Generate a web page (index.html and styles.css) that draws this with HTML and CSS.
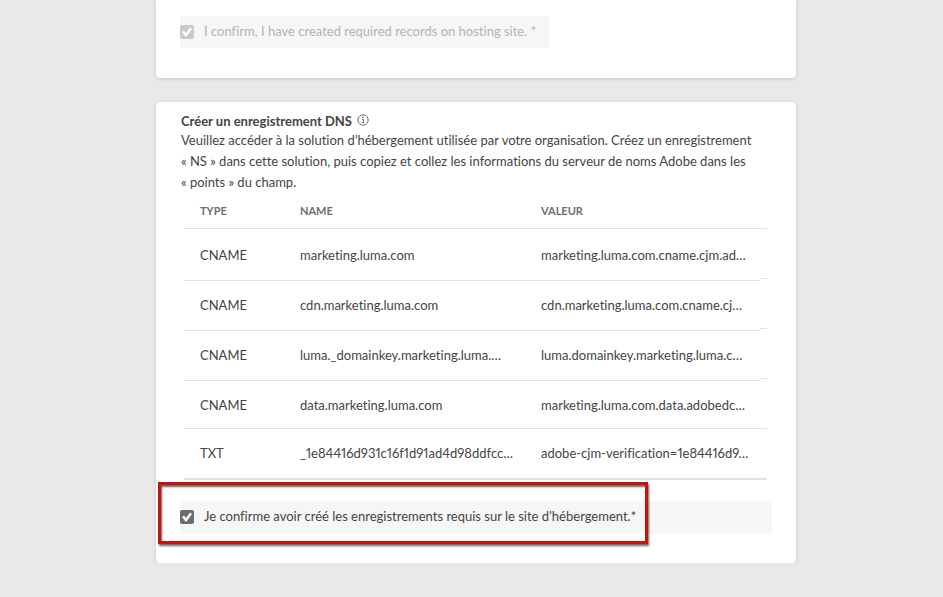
FILE: index.html
```html
<!DOCTYPE html>
<html lang="fr">
<head>
<meta charset="utf-8">
<title>Créer un enregistrement DNS</title>
<link rel="stylesheet" href="styles.css">
</head>
<body>
<main class="page">
  <section class="card card-previous">
    <label class="confirm confirm-disabled" lang="en">
      <input class="check" type="checkbox" checked disabled>
      <span>I confirm, I have created required records on hosting site. *</span>
    </label>
  </section>

  <section class="card card-dns">
    <h2 class="title">Créer un enregistrement DNS
      <svg class="info" viewBox="0 0 12 12" aria-hidden="true">
        <circle cx="6" cy="6" r="5.2" fill="none" stroke="currentColor"/>
        <circle cx="6" cy="3.4" r=".8" fill="currentColor"/>
        <path d="M5 5.2h1.3v3.3M4.8 8.7h2.6" fill="none" stroke="currentColor"/>
      </svg>
    </h2>
    <p class="intro">Veuillez accéder à la solution d’hébergement utilisée par votre organisation. Créez un enregistrement<br>
    «&nbsp;NS&nbsp;» dans cette solution, puis copiez et collez les informations du serveur de noms Adobe dans les<br>
    «&nbsp;points&nbsp;» du champ.</p>

    <table class="records">
      <colgroup><col class="col-type"><col class="col-name"><col></colgroup>
      <thead>
        <tr><th scope="col">TYPE</th><th scope="col">NAME</th><th scope="col">VALEUR</th></tr>
      </thead>
      <tbody>
        <tr class="first stepped"><td>CNAME</td><td>marketing.luma.com</td><td>marketing.luma.com.cname.cjm.ad…</td></tr>
        <tr class="stepped"><td>CNAME</td><td>cdn.marketing.luma.com</td><td>cdn.marketing.luma.com.cname.cj…</td></tr>
        <tr class="stepped"><td>CNAME</td><td>luma._domainkey.marketing.luma.…</td><td>luma.domainkey.marketing.luma.c…</td></tr>
        <tr class="short"><td>CNAME</td><td>data.marketing.luma.com</td><td>marketing.luma.com.data.adobedc…</td></tr>
        <tr class="last"><td>TXT</td><td>_1e84416d931c16f1d91ad4d98ddfcc…</td><td>adobe-cjm-verification=1e84416d9…</td></tr>
      </tbody>
    </table>

    <label class="confirm confirm-active">
      <input class="check" type="checkbox" checked>
      <span>Je confirme avoir créé les enregistrements requis sur le site d’hébergement.*</span>
    </label>
  </section>
</main>
</body>
</html>
```

FILE: styles.css
```css
* { box-sizing: border-box; }

body {
  margin: 0;
  background: #e9e9e9;
  color: #444;
  font: 13px/21px Lato, "Noto Sans", sans-serif;
  font-variant-ligatures: none;
  font-variant-numeric: proportional-nums;
}

.page {
  display: flex;
  flex-direction: column;
  gap: 24px;
  max-width: 796px;
  padding-left: 156px;
}

.card {
  padding: 10px 24px 30px;
  background: #fff;
  border-radius: 4px;
  box-shadow: 0 1px 4px rgba(0, 0, 0, .15);
}

.card-previous {
  padding-top: 16px;
  border-radius: 0 0 4px 4px;
}

.confirm {
  display: flex;
  align-items: center;
  gap: 10px;
  height: 32px;
  background: #f6f6f6;
}

.confirm span { padding-bottom: 2px; }

.confirm-disabled {
  width: 369px;
  color: #b3b3b3;
}

.check {
  appearance: none;
  flex: none;
  width: 14px;
  height: 14px;
  margin: 0;
  border-radius: 2px;
  background: #6e6e6e;
}

.check:disabled { background: #cacaca; }

.check:checked::before {
  content: "";
  display: block;
  width: 14px;
  height: 14px;
  background: #fff;
  clip-path: polygon(2px 7px, 4px 5.5px, 6px 8px, 10px 2.5px, 12px 4px, 6.5px 11.5px, 5.5px 11.5px);
}

.title {
  margin: 0;
  padding-left: 1px;
  font-size: 13px;
  line-height: 18px;
}

.info {
  width: 12px;
  height: 12px;
  margin-left: 2px;
  color: #6e6e6e;
  vertical-align: 0;
}

.intro {
  margin: 0 0 2px;
  padding-left: 1px;
  white-space: nowrap;
}

.records {
  width: calc(100% - 9px);
  margin: 0 0 21px 4px;
  table-layout: fixed;
  border-collapse: collapse;
}

.col-type { width: 100px; }
.col-name { width: 241px; }

.records th,
.records td {
  height: 50px;
  padding: 0 0 2px 16px;
  text-align: left;
  white-space: nowrap;
  background: linear-gradient(#e1e1e1, #e1e1e1) left bottom / 100% 1px no-repeat;
}

.records th {
  height: 34px;
  color: #6e6e6e;
  font-size: 11px;
  line-height: 14px;
}

.records .first td {
  height: 52px;
  padding-bottom: 0;
}

.records .short td {
  height: 48px;
  padding-bottom: 0;
}

.records .last td {
  height: 51px;
  background-size: 100% 2px;
}

.records .stepped td:last-child {
  background:
    linear-gradient(#e1e1e1, #e1e1e1) left bottom / calc(100% - 7px) 1px no-repeat,
    linear-gradient(#e1e1e1, #e1e1e1) right bottom 2px / 7px 1px no-repeat;
}

.confirm-active { position: relative; }

.confirm-active::after {
  content: "";
  position: absolute;
  inset: -19px 124px -11px -22px;
  border: 3px solid #c3150b;
  box-shadow: 1px 2px 2px rgba(0, 0, 0, .6), inset 1px 2px 2px rgba(0, 0, 0, .6);
  pointer-events: none;
}
```
